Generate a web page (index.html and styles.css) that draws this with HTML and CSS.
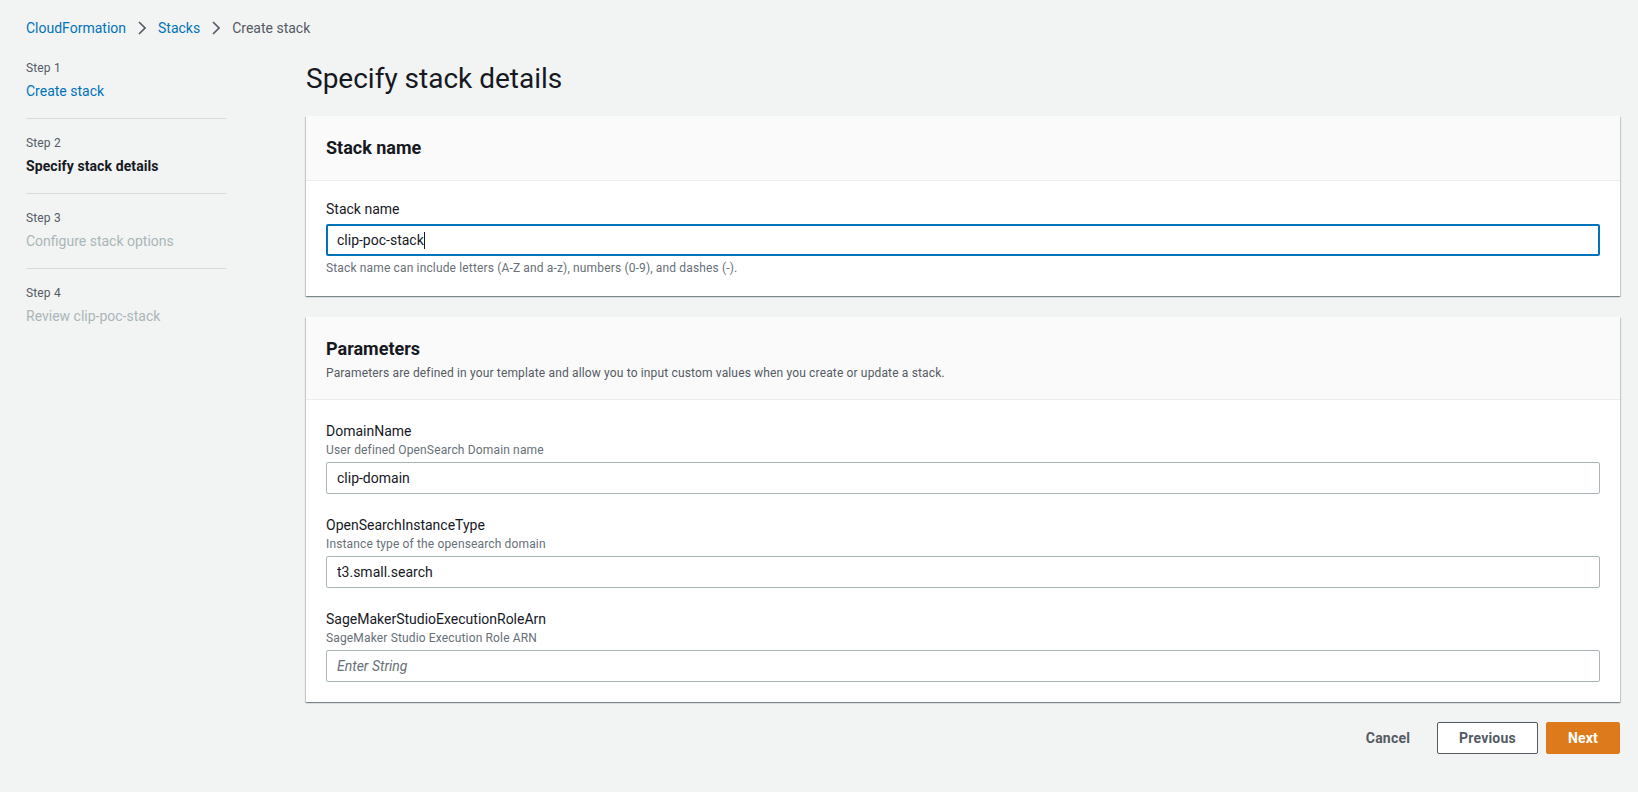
FILE: index.html
```html
<!DOCTYPE html>
<html lang="en">
<head>
<meta charset="utf-8">
<title>Specify stack details</title>
<link rel="stylesheet" href="styles.css">
</head>
<body>
<div class="page">
  <nav class="breadcrumbs">
    <a class="crumb-link" href="#">CloudFormation</a>
    <svg class="chev" viewBox="0 0 8 14" width="8" height="14"><path d="M1 1l6 6-6 6" fill="none" stroke="#545b64" stroke-width="1.6"/></svg>
    <a class="crumb-link" href="#">Stacks</a>
    <svg class="chev" viewBox="0 0 8 14" width="8" height="14"><path d="M1 1l6 6-6 6" fill="none" stroke="#545b64" stroke-width="1.6"/></svg>
    <span class="crumb-current">Create stack</span>
  </nav>
  <div class="layout">
    <ul class="steps">
      <li class="step">
        <div class="step-num">Step 1</div>
        <a class="step-title link" href="#">Create stack</a>
      </li>
      <li class="step">
        <div class="step-num">Step 2</div>
        <div class="step-title current">Specify stack details</div>
      </li>
      <li class="step">
        <div class="step-num">Step 3</div>
        <div class="step-title disabled">Configure stack options</div>
      </li>
      <li class="step last">
        <div class="step-num">Step 4</div>
        <div class="step-title disabled">Review clip-poc-stack</div>
      </li>
    </ul>
    <main class="main">
      <h1 class="title">Specify stack details</h1>

      <section class="card">
        <div class="card-header">
          <h2 class="card-title">Stack name</h2>
        </div>
        <div class="card-body">
          <div class="field">
            <label class="label">Stack name</label>
            <div class="input focused"><span class="input-text">clip-poc-stack</span><span class="caret"></span></div>
            <div class="hint">Stack name can include letters (A-Z and a-z), numbers (0-9), and dashes (-).</div>
          </div>
        </div>
      </section>

      <section class="card">
        <div class="card-header">
          <h2 class="card-title">Parameters</h2>
          <p class="card-desc">Parameters are defined in your template and allow you to input custom values when you create or update a stack.</p>
        </div>
        <div class="card-body params">
          <div class="field">
            <label class="label">DomainName</label>
            <div class="desc">User defined OpenSearch Domain name</div>
            <input class="input" type="text" value="clip-domain">
          </div>
          <div class="field">
            <label class="label">OpenSearchInstanceType</label>
            <div class="desc">Instance type of the opensearch domain</div>
            <input class="input" type="text" value="t3.small.search">
          </div>
          <div class="field">
            <label class="label">SageMakerStudioExecutionRoleArn</label>
            <div class="desc">SageMaker Studio Execution Role ARN</div>
            <input class="input" type="text" placeholder="Enter String">
          </div>
        </div>
      </section>

      <div class="actions">
        <button class="btn btn-link">Cancel</button>
        <button class="btn btn-normal">Previous</button>
        <button class="btn btn-primary">Next</button>
      </div>
    </main>
  </div>
</div>
</body>
</html>
```

FILE: styles.css
```css
* { box-sizing: border-box; }
html, body { margin: 0; padding: 0; }
body {
  background: #f2f3f3;
  font-family: Roboto, "Open Sans", "Liberation Sans", sans-serif;
  font-size: 14px;
  color: #16191f;
  width: 1638px;
  height: 792px;
  overflow: hidden;
}
.page { padding: 0 18px 0 26px; }

.breadcrumbs {
  height: 56px;
  display: flex;
  align-items: center;
  gap: 12px;
  font-size: 14px;
}
.crumb-link { color: #0073bb; text-decoration: none; }
.crumb-current { color: #545b64; }
.chev { display: block; }

.layout { display: flex; gap: 80px; }

.steps {
  list-style: none;
  margin: 0;
  padding: 4px 0 0;
  width: 200px;
  flex: none;
}
.step {
  border-bottom: 1px solid #d5dbdb;
  padding: 0 0 17px;
  margin-bottom: 16px;
}
.step.last { border-bottom: none; }
.step-num {
  font-size: 12px;
  line-height: 16px;
  color: #545b64;
  letter-spacing: 0.15px;
}
.step-title {
  display: block;
  margin-top: 5px;
  font-size: 14px;
  line-height: 20px;
}
.step-title.link { color: #0073bb; text-decoration: none; }
.step-title.current { font-weight: 700; color: #16191f; letter-spacing: 0.1px; }
.step-title.disabled { color: #aab7b8; }

.main { flex: 1; min-width: 0; }
.title {
  margin: 5px 0 19px;
  font-size: 28px;
  line-height: 36px;
  font-weight: 400;
  color: #16191f;
}

.card {
  background: #fff;
  box-shadow: 0 1px 1px 0 rgba(0,28,36,.3), 1px 1px 1px 0 rgba(0,28,36,.15), -1px 1px 1px 0 rgba(0,28,36,.15);
  margin-bottom: 21px;
}
.card-header {
  background: #fafafa;
  border-bottom: 1px solid #eaeded;
  padding: 20px 20px 20px;
}
.card-title {
  margin: 0;
  font-size: 18px;
  line-height: 24px;
  font-weight: 700;
  color: #16191f;
}
.card-desc {
  margin: 4px 0 -2px;
  font-size: 12px;
  line-height: 16px;
  color: #545b64;
  letter-spacing: 0.15px;
}
.card-body { padding: 17px 20px 20px; }
.card-body.params { padding-top: 20px; display: flex; flex-direction: column; gap: 20px; }

.field { display: flex; flex-direction: column; }
.label {
  font-size: 14px;
  line-height: 22px;
  color: #16191f;
}
.desc {
  font-size: 12px;
  line-height: 16px;
  color: #687078;
  margin-bottom: 4px;
  letter-spacing: 0.15px;
}
.field > .label + .input { margin-top: 4px; }
.input {
  display: flex;
  align-items: center;
  width: 100%;
  height: 32px;
  padding: 4px 10px;
  border: 1px solid #aab7b8;
  border-radius: 2px;
  background: #fff;
  font-family: inherit;
  font-size: 14px;
  color: #16191f;
  outline: none;
}
.input::placeholder { color: #687078; font-style: italic; }
.input.focused {
  border: 2px solid #0073bb;
  padding: 4px 9px;
}
.caret {
  display: inline-block;
  width: 1px;
  height: 17px;
  background: #16191f;
}
.hint {
  margin-top: 4px;
  font-size: 12px;
  line-height: 16px;
  color: #687078;
  letter-spacing: 0.15px;
}

.actions {
  display: flex;
  justify-content: flex-end;
  gap: 8px;
  margin-top: -1px;
}
.btn {
  height: 32px;
  font-family: inherit;
  font-size: 14px;
  font-weight: 700;
  letter-spacing: 0.2px;
  border-radius: 2px;
  padding: 0 21px;
  cursor: pointer;
}
.btn-link {
  background: transparent;
  border: 1px solid transparent;
  color: #545b64;
  padding: 0 16px 0 21px;
  margin-right: 2px;
}
.btn-normal {
  background: #fff;
  border: 1px solid #545b64;
  color: #545b64;
}
.btn-primary {
  background: #dd7b1c;
  border: 1px solid #dd7b1c;
  color: #fff;
}
```
